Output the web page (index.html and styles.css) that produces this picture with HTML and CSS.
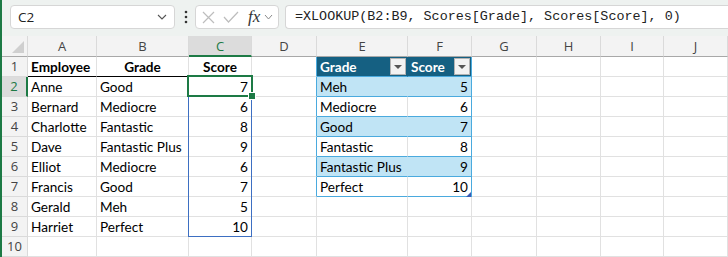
FILE: index.html
```html
<!DOCTYPE html>
<html lang="en">
<head>
    <meta charset="UTF-8">
    <title>XLOOKUP - Scores</title>
    <link rel="stylesheet" href="styles.css">
</head>
<body>
    <div class="formula-bar">
        <div class="name-box">
            <span>C2</span>
            <svg class="chev" width="10" height="6" viewBox="0 0 10 6"><polyline points="1,1 5,5 9,1" fill="none" stroke="#555" stroke-width="1.1"/></svg>
        </div>
        <svg class="dots" width="4" height="14" viewBox="0 0 4 14"><circle cx="2" cy="2" r="1.3" fill="#333"/><circle cx="2" cy="7" r="1.3" fill="#333"/><circle cx="2" cy="12" r="1.3" fill="#333"/></svg>
        <div class="fx-box">
            <svg width="13" height="13" viewBox="0 0 13 13"><path d="M1 1 L12 12 M12 1 L1 12" stroke="#bdbdbd" stroke-width="1.2" fill="none"/></svg>
            <svg width="16" height="12" viewBox="0 0 16 12"><polyline points="1,6 5.5,11 15,1" fill="none" stroke="#bdbdbd" stroke-width="1.2"/></svg>
            <span class="fx">fx</span>
            <svg class="chev-sm" width="9" height="6" viewBox="0 0 9 6"><polyline points="1,1 4.5,5 8,1" fill="none" stroke="#8a8a8a" stroke-width="1"/></svg>
        </div>
        <div class="formula-input">=XLOOKUP(B2:B9, Scores[Grade], Scores[Score], 0)</div>
    </div>

    <div class="sheet">
        <div class="hd corner"></div>
        <div class="hd">A</div>
        <div class="hd">B</div>
        <div class="hd sel">C</div>
        <div class="hd">D</div>
        <div class="hd">E</div>
        <div class="hd">F</div>
        <div class="hd">G</div>
        <div class="hd">H</div>
        <div class="hd">I</div>
        <div class="hd">J</div>

        <div class="rn">1</div>
        <div class="c b ul">Employee</div>
        <div class="c b ul ctr">Grade</div>
        <div class="c b ul ctr">Score</div>
        <div class="c tl"></div>
        <div class="c th">Grade<span class="filter"></span></div>
        <div class="c th tr">Score<span class="filter"></span></div>
        <div class="c"></div><div class="c"></div><div class="c"></div><div class="c"></div>

        <div class="rn sel">2</div>
        <div class="c">Anne</div>
        <div class="c">Good</div>
        <div class="c num">7</div>
        <div class="c tl"></div>
        <div class="c t band">Meh</div>
        <div class="c t band tr num">5</div>
        <div class="c"></div><div class="c"></div><div class="c"></div><div class="c"></div>

        <div class="rn">3</div>
        <div class="c">Bernard</div>
        <div class="c">Mediocre</div>
        <div class="c num">6</div>
        <div class="c tl"></div>
        <div class="c t">Mediocre</div>
        <div class="c t tr num">6</div>
        <div class="c"></div><div class="c"></div><div class="c"></div><div class="c"></div>

        <div class="rn">4</div>
        <div class="c">Charlotte</div>
        <div class="c">Fantastic</div>
        <div class="c num">8</div>
        <div class="c tl"></div>
        <div class="c t band">Good</div>
        <div class="c t band tr num">7</div>
        <div class="c"></div><div class="c"></div><div class="c"></div><div class="c"></div>

        <div class="rn">5</div>
        <div class="c">Dave</div>
        <div class="c">Fantastic Plus</div>
        <div class="c num">9</div>
        <div class="c tl"></div>
        <div class="c t">Fantastic</div>
        <div class="c t tr num">8</div>
        <div class="c"></div><div class="c"></div><div class="c"></div><div class="c"></div>

        <div class="rn">6</div>
        <div class="c">Elliot</div>
        <div class="c">Mediocre</div>
        <div class="c num">6</div>
        <div class="c tl"></div>
        <div class="c t band">Fantastic Plus</div>
        <div class="c t band tr num">9</div>
        <div class="c"></div><div class="c"></div><div class="c"></div><div class="c"></div>

        <div class="rn">7</div>
        <div class="c">Francis</div>
        <div class="c">Good</div>
        <div class="c num">7</div>
        <div class="c tl"></div>
        <div class="c t">Perfect</div>
        <div class="c t tr num">10</div>
        <div class="c"></div><div class="c"></div><div class="c"></div><div class="c"></div>

        <div class="rn">8</div>
        <div class="c">Gerald</div>
        <div class="c">Meh</div>
        <div class="c num">5</div>
        <div class="c"></div><div class="c"></div><div class="c"></div>
        <div class="c"></div><div class="c"></div><div class="c"></div><div class="c"></div>

        <div class="rn">9</div>
        <div class="c">Harriet</div>
        <div class="c">Perfect</div>
        <div class="c num">10</div>
        <div class="c"></div><div class="c"></div><div class="c"></div>
        <div class="c"></div><div class="c"></div><div class="c"></div><div class="c"></div>

        <div class="rn">10</div>
        <div class="c"></div><div class="c"></div><div class="c"></div><div class="c"></div><div class="c"></div>
        <div class="c"></div><div class="c"></div><div class="c"></div><div class="c"></div><div class="c"></div>

        <!-- overlays: spill range, active cell, table resize handle -->
        <div class="spill-box"></div>
        <div class="sel-box"></div>
        <div class="fill-handle"></div>
        <div class="resize-handle"></div>
    </div>
</body>
</html>
```

FILE: styles.css
```css
* {
    margin: 0;
    padding: 0;
    box-sizing: border-box;
}

body {
    width: 728px;
    height: 257px;
    overflow: hidden;
    background: #fff;
    border-left: 2px solid #1d7a45;
    font-family: Lato, "Liberation Sans", sans-serif;
}

/* formula bar */
.formula-bar {
    height: 36px;
    background: #eef2f0;
    display: flex;
    align-items: flex-start;
    padding: 5px 0 0 8px;
}

.name-box {
    width: 165px;
    height: 24px;
    background: #fff;
    border: 1px solid #d6d6d6;
    border-radius: 4px;
    display: flex;
    align-items: center;
    justify-content: space-between;
    padding: 0 7px 0 7px;
    font-family: "Open Sans", "Noto Sans", sans-serif;
    font-size: 13.5px;
    color: #222;
}

.dots {
    margin: 5px 7px 0 9px;
}

.fx-box {
    width: 84px;
    height: 24px;
    background: #fff;
    border: 1px solid #d6d6d6;
    border-radius: 4px;
    display: flex;
    align-items: center;
    padding-left: 6px;
    gap: 8px;
}

.fx {
    font-family: "Liberation Serif", "DejaVu Serif", serif;
    font-style: italic;
    font-size: 17px;
    color: #333;
    margin-left: 1px;
    margin-right: -4px;
}

.formula-input {
    flex: 1;
    height: 24px;
    margin-left: 6px;
    background: #fff;
    border: 1px solid #d6d6d6;
    border-right: none;
    border-radius: 4px 0 0 4px;
    padding-left: 9px;
    font-family: "Liberation Mono", "DejaVu Sans Mono", monospace;
    font-size: 13.4px;
    line-height: 22px;
    color: #222;
    white-space: nowrap;
}

/* grid */
.sheet {
    position: relative;
    display: grid;
    grid-template-columns: 26px 69px 92px 63px 65px 91px 64px 65px 64px 63px 64px;
    grid-template-rows: 21px repeat(10, 20px);
}

.hd {
    background: #f3f3f3;
    border-right: 1px solid #dadada;
    border-bottom: 1px solid #a8a8a8;
    font-family: "Open Sans", "Noto Sans", sans-serif;
    font-size: 13px;
    color: #444;
    text-align: center;
    line-height: 20px;
}

.hd.sel {
    background: #dcdcdc;
    color: #1d7a45;
    border-bottom: 2px solid #1d7a45;
}

.hd.corner {
    position: relative;
}

.hd.corner::after {
    content: "";
    position: absolute;
    right: 3px;
    bottom: 3px;
    border-left: 12px solid transparent;
    border-bottom: 12px solid #cfcfcf;
}

.rn {
    background: #f3f3f3;
    border-right: 1px solid #dadada;
    border-bottom: 1px solid #dadada;
    font-family: "Open Sans", "Noto Sans", sans-serif;
    font-size: 13px;
    color: #444;
    text-align: center;
    line-height: 19px;
}

.rn.sel {
    background: #dcdcdc;
    color: #1d7a45;
    border-right: 2px solid #1d7a45;
}

.c {
    border-right: 1px solid #e1e1e1;
    border-bottom: 1px solid #e1e1e1;
    font-size: 13.6px;
    line-height: 20px;
    padding: 0 3px;
    color: #000;
    white-space: nowrap;
    overflow: hidden;
}

.c.b {
    font-weight: bold;
}

.c.ctr {
    text-align: center;
}

.c.num {
    text-align: right;
}

.c.ul {
    border-bottom-color: #000;
}

/* Scores table */
.c.tl {
    border-right-color: #4aaade;
}

.c.th {
    position: relative;
    background: #156082;
    color: #fff;
    font-weight: bold;
    border-right-color: #156082;
    border-bottom-color: #4aaade;
}

.c.t {
    border-bottom-color: #4aaade;
}

.c.band {
    background: #c0e4f5;
    border-right-color: #c0e4f5;
}

.c.tr {
    border-right-color: #4aaade;
}

.filter {
    position: absolute;
    right: 1px;
    top: 1px;
    width: 16px;
    height: 17px;
    background: #f2f2f2;
    border: 1px solid #b4b4b4;
}

.filter::after {
    content: "";
    position: absolute;
    left: 3px;
    top: 6px;
    border-left: 4px solid transparent;
    border-right: 4px solid transparent;
    border-top: 4px solid #555;
}

/* overlays */
.spill-box {
    position: absolute;
    left: 186px;
    top: 60px;
    width: 64px;
    height: 141px;
    border: 1px solid #3d6fc2;
}

.sel-box {
    position: absolute;
    left: 185px;
    top: 39px;
    width: 66px;
    height: 22px;
    border: 2px solid #1d7a45;
}

.fill-handle {
    position: absolute;
    left: 246px;
    top: 56px;
    width: 8px;
    height: 8px;
    background: #1d7a45;
    border: 1px solid #fff;
}

.resize-handle {
    position: absolute;
    left: 464px;
    top: 156px;
    border-left: 5px solid transparent;
    border-bottom: 5px solid #3b5bb5;
}
```
